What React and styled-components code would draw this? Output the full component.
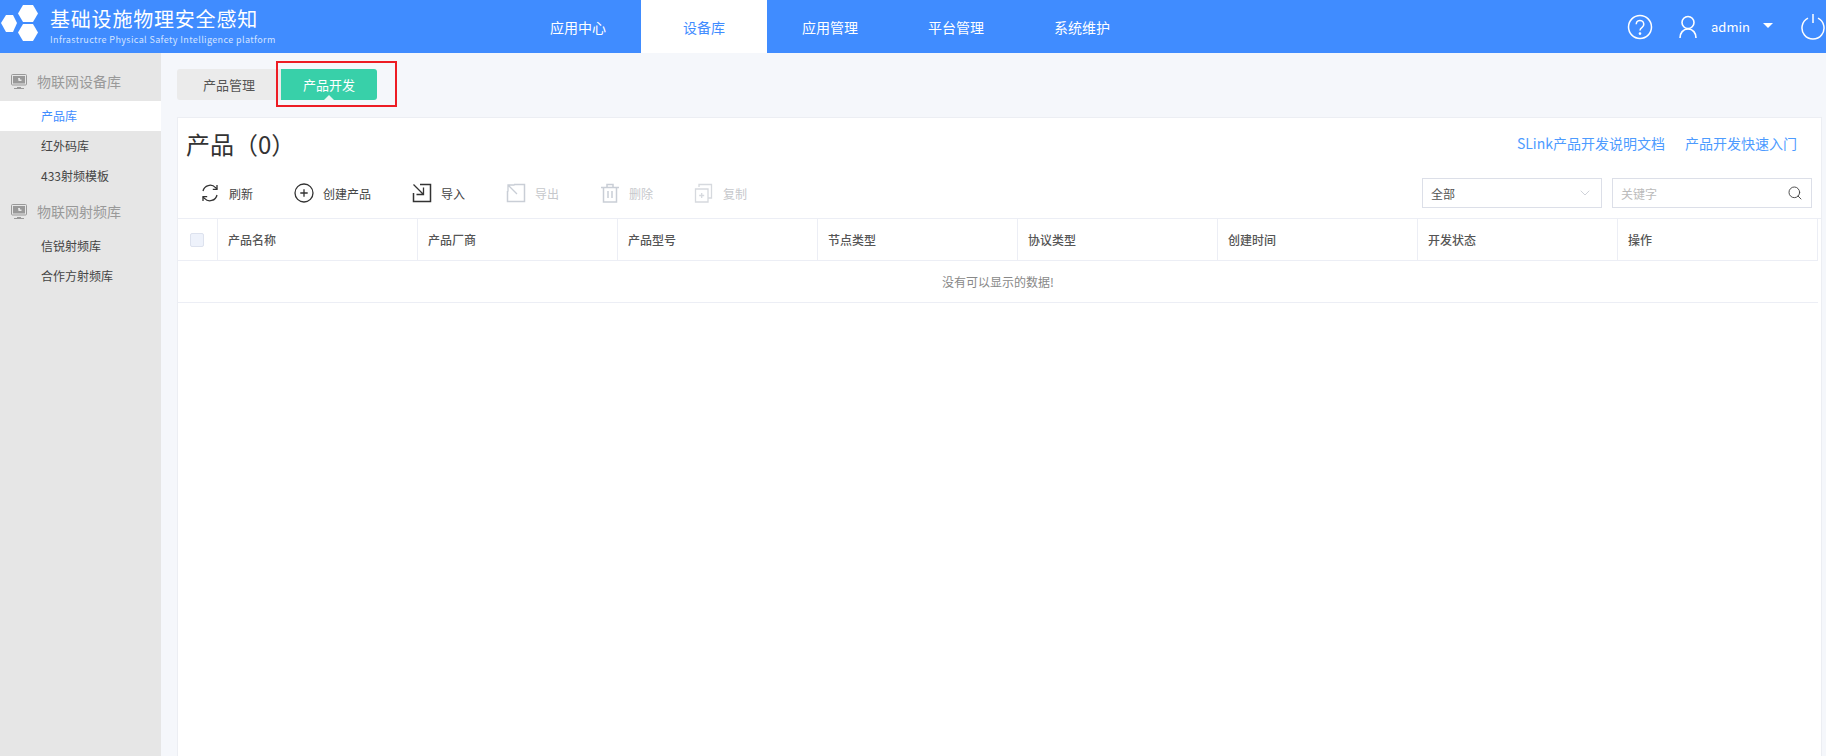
import React from "react"
import styled, { createGlobalStyle } from "styled-components"
import { Search, ChevronDown } from "lucide-react"

const FONT = `"Noto Sans CJK SC", "Noto Sans", sans-serif`

const GlobalStyle = createGlobalStyle`
  html, body {
    margin: 0;
    height: 100%;
    overflow: hidden;
    background: #f5f7fb;
    font-family: ${FONT};
  }
  * { box-sizing: border-box; }
`

const Page = styled.div`
  display: flex;
  flex-direction: column;
  height: 756px;
  width: 1826px;
`

const Header = styled.header`
  display: flex;
  align-items: stretch;
  height: 53px;
  background: #408cff;
  color: #fff;
  flex: none;
`

const Brand = styled.div`
  display: flex;
  align-items: center;
  width: 515px;
`

const BrandText = styled.div`
  margin-left: 10px;
  margin-top: -1px;
`

const BrandTitle = styled.div`
  font-size: 20px;
  line-height: 24px;
  letter-spacing: 0.8px;
  white-space: nowrap;
`

const BrandSub = styled.div`
  font-size: 9px;
  line-height: 12px;
  letter-spacing: 0.38px;
  color: #d3e3ff;
  white-space: nowrap;
  margin-top: 3px;
`

const Nav = styled.nav`
  display: flex;
`

const NavItem = styled.a`
  display: flex;
  align-items: center;
  justify-content: center;
  width: 126px;
  font-size: 14px;
  color: ${p => (p.$active ? "#408cff" : "#fff")};
  background: ${p => (p.$active ? "#fff" : "transparent")};
`

const HeaderRight = styled.div`
  display: flex;
  align-items: center;
  margin-left: auto;
  padding-right: 1px;
`

const UserName = styled.span`
  font-size: 13px;
  margin-left: 14px;
  width: 36px;
`

const Caret = styled.span`
  width: 0;
  height: 0;
  border-left: 5px solid transparent;
  border-right: 5px solid transparent;
  border-top: 5px solid #fff;
  margin: -2px 28px 0 16px;
`

const Body = styled.div`
  display: flex;
  flex: 1;
  min-height: 0;
`

const Sidebar = styled.aside`
  width: 161px;
  background: #e6e6e6;
  padding-top: 8px;
  flex: none;
`

const GroupTitle = styled.div`
  display: flex;
  align-items: center;
  height: 40px;
  padding-left: 11px;
  gap: 10px;
  font-size: 14px;
  color: #999;
`

const SideItem = styled.a`
  display: block;
  height: 30px;
  line-height: 30px;
  padding-left: 41px;
  font-size: 12px;
  color: ${p => (p.$active ? "#408cff" : "#444")};
  background: ${p => (p.$active ? "#fff" : "transparent")};
`

const Main = styled.main`
  flex: 1;
  min-width: 0;
  padding: 16px 4px 0 16px;
  display: flex;
  flex-direction: column;
`

const Tabs = styled.div`
  display: flex;
  height: 31px;
  position: relative;
  margin-bottom: 17px;
`

const Tab = styled.a`
  position: relative;
  display: flex;
  align-items: center;
  justify-content: center;
  height: 31px;
  font-size: 13px;
  width: ${p => (p.$active ? 96 : 104)}px;
  color: ${p => (p.$active ? "#fff" : "#555")};
  background: ${p => (p.$active ? "#38d0a9" : "#ebebeb")};
  border-radius: ${p => (p.$active ? "0 3px 3px 0" : "3px 0 0 3px")};

  ${p =>
    p.$active &&
    `&::after {
      content: "";
      position: absolute;
      left: 50%;
      bottom: 0;
      margin-left: -5px;
      border-left: 5px solid transparent;
      border-right: 5px solid transparent;
      border-bottom: 5px solid #e9f8f4;
    }`}
`

const Highlight = styled.div`
  position: absolute;
  left: 99px;
  top: -8px;
  width: 121px;
  height: 46px;
  border: 2px solid #ed1c24;
  pointer-events: none;
`

const Card = styled.section`
  flex: 1;
  background: #fff;
  border: 1px solid #eceef3;
  border-bottom: 0;
  display: flex;
  flex-direction: column;
`

const CardHead = styled.div`
  display: flex;
  align-items: center;
  justify-content: space-between;
  height: 50px;
  padding: 0 24px 0 8px;
`

const CardTitle = styled.h2`
  margin: 0;
  font-size: 24px;
  font-weight: 400;
  color: #333;
  white-space: nowrap;
`

const DocLinks = styled.div`
  display: flex;
  gap: 20px;
  font-size: 14px;
  color: #4d9bff;
`

const Toolbar = styled.div`
  display: flex;
  align-items: center;
  height: 50px;
  padding: 0 9px 0 22px;
`

const Actions = styled.div`
  display: flex;
  align-items: center;
  gap: 41px;
`

const Action = styled.button`
  display: flex;
  align-items: center;
  gap: 9px;
  padding: 0;
  border: 0;
  background: none;
  font: 12px ${FONT};
  color: ${p => (p.disabled ? "#c6c8cc" : "#444")};
`

const Filters = styled.div`
  display: flex;
  gap: 10px;
  margin-left: auto;
`

const Select = styled.div`
  display: flex;
  align-items: center;
  justify-content: space-between;
  width: 180px;
  height: 30px;
  padding: 0 8px;
  border: 1px solid #dcdfe8;
  font-size: 12px;
  color: #555;
`

const SearchBox = styled(Select)`
  width: 200px;
  color: #bbb;
`

const Table = styled.div`
  display: grid;
  grid-template-columns: 40px repeat(8, 200px);
  border-top: 1px solid #eceef5;
`

const HeadCell = styled.div`
  display: flex;
  align-items: center;
  height: 42px;
  padding-left: ${p => (p.$center ? 0 : 10)}px;
  justify-content: ${p => (p.$center ? "center" : "flex-start")};
  font-size: 12px;
  font-weight: 500;
  color: #555;
  border-bottom: 1px solid #eceef5;
  border-right: 1px solid #eceef5;
`

const Checkbox = styled.span`
  width: 14px;
  height: 14px;
  margin-left: -1px;
  border: 1px solid #dde2ee;
  border-radius: 2px;
  background: #eef2fb;
`

const EmptyRow = styled.div`
  grid-column: 1 / -1;
  height: 42px;
  line-height: 41px;
  text-align: center;
  font-size: 12px;
  color: #888;
  border-bottom: 1px solid #eceef5;
`

const Logo = () => (
  <svg width="40" height="53" viewBox="0 0 40 53" style={{ flex: "none" }}>
    <g fill="#fff">
      <polygon points="6,15 13,15 17,23 13,32 6,32 1,23" />
      <polygon points="23,5 33,5 38,13.5 33,22 23,22 18,13.5" />
      <polygon points="23,24 33,24 38,32.5 33,41 23,41 18,32.5" />
    </g>
  </svg>
)

const Help = () => (
  <svg width="26" height="26" viewBox="0 0 26 26" fill="none" stroke="#fff" strokeWidth="1.5">
    <circle cx="13" cy="13" r="11.5" />
    <path d="M9.2 10.2a3.8 3.8 0 1 1 5.9 3.2c-1.3.9-2.1 1.5-2.1 3.2" />
    <circle cx="13" cy="19.6" r="0.6" fill="#fff" />
  </svg>
)

const User = () => (
  <svg width="18" height="24" viewBox="0 0 18 24" fill="none" stroke="#fff" strokeWidth="1.6" style={{ marginLeft: 26 }}>
    <circle cx="9" cy="7.5" r="6" />
    <path d="M1 23c0-5 3-9 8-9s8 4 8 9" />
  </svg>
)

const Power = () => (
  <svg width="24" height="26" viewBox="0 0 24 26" fill="none" stroke="#fff" strokeWidth="1.5">
    <path d="M7 4.2a11 11 0 1 0 10 0" />
    <path d="M12 0v9" />
  </svg>
)

const Monitor = () => (
  <svg width="16" height="15" viewBox="0 0 16 15" style={{ flex: "none" }}>
    <rect x="0.5" y="0.5" width="15" height="10.5" rx="1" fill="#e6e6e6" stroke="#999" />
    <rect x="2" y="2" width="12" height="7.5" fill="#999" />
    <path d="M7 4h2v1.5h1.5V7h-3z" fill="#e6e6e6" />
    <path d="M6 13h4v1H6zM3 14h10v1H3z" fill="#999" />
  </svg>
)

const IconBase = ({ color, children }) => (
  <svg width="20" height="20" viewBox="0 0 20 20" fill="none" stroke={color} strokeWidth="1.3" style={{ flex: "none" }}>
    {children}
  </svg>
)

const RefreshIcon = () => (
  <IconBase color="#333">
    <path d="M3 8a7.3 7.3 0 0 1 12.5-3.4L17 6" />
    <path d="M17 12a7.3 7.3 0 0 1-12.5 3.4L3 14" />
    <path d="M17 2v4.4h-4.2M3 18v-4.4h4.2" />
  </IconBase>
)

const CreateIcon = () => (
  <IconBase color="#333">
    <circle cx="10" cy="10" r="9" />
    <path d="M10 6.3v7.4M6.3 10h7.4" />
  </IconBase>
)

const ImportIcon = () => (
  <IconBase color="#333">
    <path d="M8 1.5h10.5v17H1.5V10" strokeWidth="1.5" />
    <path d="M1.5 1.5l9.5 9.5M11.5 4.5v7h-7" />
  </IconBase>
)

const ExportIcon = () => (
  <IconBase color="#c9ced6">
    <path d="M8 1.5h10.5v17H1.5V8" strokeWidth="1.5" />
    <path d="M11 11L2 2M2 8.5V2h6.5" />
  </IconBase>
)

const DeleteIcon = () => (
  <IconBase color="#c9ced6">
    <path d="M1 4.5h18M7 4V1.5h6V4M3.5 4.5v14.5h13V4.5M8 8v7M12 8v7" strokeWidth="1.5" />
  </IconBase>
)

const CopyIcon = () => (
  <IconBase color="#d6d9de">
    <path d="M5 4V1.5h12.5v13.5H14" />
    <path d="M1.5 6h12.5v13H1.5z" />
    <path d="M7.7 10v5M5.2 12.5h5" />
  </IconBase>
)

const actions = [
  { label: "刷新", Icon: RefreshIcon },
  { label: "创建产品", Icon: CreateIcon },
  { label: "导入", Icon: ImportIcon },
  { label: "导出", Icon: ExportIcon, disabled: true },
  { label: "删除", Icon: DeleteIcon, disabled: true },
  { label: "复制", Icon: CopyIcon, disabled: true },
]

const columns = ["产品名称", "产品厂商", "产品型号", "节点类型", "协议类型", "创建时间", "开发状态", "操作"]

const navItems = ["应用中心", "设备库", "应用管理", "平台管理", "系统维护"]

export default function App() {
  return (
    <Page>
      <GlobalStyle />
      <Header>
        <Brand>
          <Logo />
          <BrandText>
            <BrandTitle>基础设施物理安全感知</BrandTitle>
            <BrandSub>Infrastructre Physical Safety Intelligence platform</BrandSub>
          </BrandText>
        </Brand>
        <Nav>
          {navItems.map(item => (
            <NavItem key={item} $active={item === "设备库"}>
              {item}
            </NavItem>
          ))}
        </Nav>
        <HeaderRight>
          <Help />
          <User />
          <UserName>admin</UserName>
          <Caret />
          <Power />
        </HeaderRight>
      </Header>
      <Body>
        <Sidebar>
          <GroupTitle>
            <Monitor />
            物联网设备库
          </GroupTitle>
          <SideItem $active>产品库</SideItem>
          <SideItem>红外码库</SideItem>
          <SideItem>433射频模板</SideItem>
          <GroupTitle>
            <Monitor />
            物联网射频库
          </GroupTitle>
          <SideItem>信锐射频库</SideItem>
          <SideItem>合作方射频库</SideItem>
        </Sidebar>
        <Main>
          <Tabs>
            <Tab>产品管理</Tab>
            <Tab $active>产品开发</Tab>
            <Highlight />
          </Tabs>
          <Card>
            <CardHead>
              <CardTitle>产品（0）</CardTitle>
              <DocLinks>
                <span>SLink产品开发说明文档</span>
                <span>产品开发快速入门</span>
              </DocLinks>
            </CardHead>
            <Toolbar>
              <Actions>
                {actions.map(({ label, Icon, disabled }) => (
                  <Action key={label} disabled={disabled}>
                    <Icon />
                    {label}
                  </Action>
                ))}
              </Actions>
              <Filters>
                <Select>
                  全部
                  <ChevronDown size={16} color="#c8ccd4" strokeWidth={1.3} />
                </Select>
                <SearchBox>
                  关键字
                  <Search size={16} color="#444" strokeWidth={1.4} />
                </SearchBox>
              </Filters>
            </Toolbar>
            <Table>
              <HeadCell $center>
                <Checkbox />
              </HeadCell>
              {columns.map(col => (
                <HeadCell key={col}>{col}</HeadCell>
              ))}
              <EmptyRow>没有可以显示的数据!</EmptyRow>
            </Table>
          </Card>
        </Main>
      </Body>
    </Page>
  )
}
